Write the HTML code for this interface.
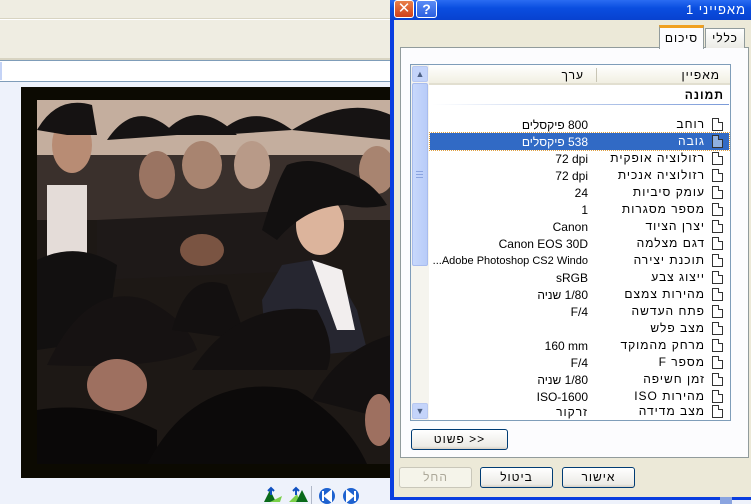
<!DOCTYPE html>
<html><head><meta charset="utf-8"><style>
*{margin:0;padding:0;box-sizing:border-box}
body{width:751px;height:504px;overflow:hidden;position:relative;background:#eef2fb;font-family:"Liberation Sans","DejaVu Sans",sans-serif;font-size:11px;color:#000}
.abs{position:absolute}
.row{position:absolute;left:430px;width:299px;height:17px;line-height:17px}
.row .n{position:absolute;right:24px;top:0;direction:rtl;white-space:nowrap;font-size:12px;letter-spacing:1px;line-height:17px}
.row .v{position:absolute;right:141px;top:1px;white-space:nowrap;direction:rtl;font-size:12px;line-height:17px}
.row .v.l{direction:ltr}
.row .ic{position:absolute;right:6px;top:2px;width:11px;height:13px;border:1px solid #333;background:#fff}
.row .ic:after{content:"";position:absolute;right:-1px;top:-1px;width:4px;height:4px;background:#fff;border-left:1px solid #333;border-bottom:1px solid #333}
.sel{background:#316ac5;color:#fff;outline:1px dotted #e0a040}
.sel .ic{background:#8fb0e0}
.sel .ic:after{background:#316ac5}
.btn{position:absolute;height:21px;border:1px solid #003c74;border-radius:3px;background:linear-gradient(#fff,#ecebe6 85%,#d6d0c5);text-align:center;line-height:19px;font-size:12px;letter-spacing:1px;direction:rtl}
</style></head><body>
<div class="abs" style="left:0;top:0;width:391px;height:60px;background:#efede2"></div>
<div class="abs" style="left:0;top:18px;width:391px;height:2px;background:#d8d4c2;border-bottom:1px solid #fff"></div>
<div class="abs" style="left:0;top:58px;width:391px;height:2px;background:#d8d4c2"></div>
<div class="abs" style="left:0;top:60px;width:391px;height:22px;background:#fff;border-top:1px solid #7f9db9;border-bottom:1px solid #7f9db9"></div>
<div class="abs" style="left:0;top:62px;width:2px;height:18px;background:#c4d3f6"></div>
<div class="abs" style="left:21px;top:87px;width:370px;height:391px;background:#0c0a02"></div>
<svg class="abs" style="left:37px;top:100px" width="354" height="364" viewBox="0 0 354 364">
<rect width="354" height="364" fill="#1d1815"/>
<rect width="354" height="55" fill="#c4ae9e"/>
<rect y="55" width="354" height="65" fill="#3a302c"/>
<ellipse cx="35" cy="45" rx="20" ry="28" fill="#b88c74"/>
<rect x="10" y="85" width="40" height="80" fill="#e4dcd8"/>
<ellipse cx="120" cy="75" rx="18" ry="24" fill="#9a7462"/>
<ellipse cx="165" cy="65" rx="20" ry="24" fill="#a88470"/>
<ellipse cx="215" cy="65" rx="18" ry="24" fill="#b89a88"/>
<ellipse cx="340" cy="70" rx="18" ry="24" fill="#a88470"/>
<path d="M0 30 Q20 -5 55 5 L60 35 L30 35Z" fill="#151212"/>
<path d="M70 40 Q100 -5 140 35Z" fill="#161313"/>
<path d="M125 35 Q160 -5 200 35Z" fill="#161313"/>
<path d="M180 35 Q215 0 255 30Z" fill="#161313"/>
<path d="M255 30 Q310 -5 354 15 L354 40Z" fill="#161313"/>
<path d="M60 120 L270 110 L290 170 L60 180Z" fill="#1e1918"/>
<ellipse cx="165" cy="150" rx="22" ry="16" fill="#7a5442"/>
<ellipse cx="283" cy="125" rx="24" ry="30" fill="#dcb49c"/>
<path d="M225 130 Q240 80 250 65 Q275 55 305 70 Q335 80 350 105 Q330 110 310 105 Q270 105 240 140Z" fill="#121010"/>
<path d="M245 165 L275 160 L300 175 L320 210 L330 250 L230 260 L225 200Z" fill="#262630"/>
<path d="M275 160 L305 170 L318 230 L300 230Z" fill="#f2eeee"/>
<path d="M0 160 Q40 140 80 165 L70 240 L0 250Z" fill="#121010"/>
<path d="M10 265 Q50 180 110 200 Q150 220 160 250 Q120 270 10 265Z" fill="#161212"/>
<ellipse cx="80" cy="285" rx="30" ry="26" fill="#9e7060"/>
<path d="M135 230 Q150 170 190 185 L210 240Z" fill="#131010"/>
<path d="M155 270 Q200 200 280 210 Q300 245 290 270Z" fill="#131010"/>
<path d="M275 300 Q300 250 354 235 L354 320Z" fill="#131010"/>
<ellipse cx="342" cy="320" rx="14" ry="26" fill="#9e7060"/>
<path d="M0 310 Q60 300 120 330 L120 364 L0 364Z" fill="#0a0808"/>
<path d="M110 364 Q160 270 260 290 Q310 320 330 364Z" fill="#0c0a0a"/>
</svg>
<svg class="abs" style="left:262px;top:486px" width="100" height="18">
<path d="M2 16 L8 4 L14 16Z" fill="#0a6a1a"/><path d="M8 16 L20 10 L18 16Z" fill="#7ad04a"/><path d="M9 9 L9 2 M6 5 L9 2 L12 5" stroke="#1050c0" stroke-width="2" fill="none"/>
<path d="M27 16 L35 8 L38 16Z" fill="#7ad04a"/><path d="M34 16 L40 4 L46 16Z" fill="#0a6a1a"/><path d="M34 9 L34 2 M31 5 L34 2 L37 5" stroke="#1050c0" stroke-width="2" fill="none"/>
<rect x="49" y="0" width="1" height="18" fill="#b0b8c8"/>
<circle cx="65" cy="10" r="8" fill="#1e62d0"/><path d="M61 5v10M69 5l-6 5 6 5Z" stroke="#fff" stroke-width="2" fill="#fff"/>
<circle cx="89" cy="10" r="8" fill="#1e62d0"/><path d="M93 5v10M85 5l6 5-6 5Z" stroke="#fff" stroke-width="2" fill="#fff"/>
</svg>
<div class="abs" style="left:390px;top:0;width:361px;height:500px;background:#0a3ee0"></div>
<div class="abs" style="left:390px;top:0;width:361px;height:20px;background:linear-gradient(#2a6cf2,#0a4ee0 40%,#0842d0)"></div>
<div class="abs" style="left:600px;top:2px;width:146px;text-align:right;color:#fff;font-size:13px;direction:rtl;line-height:16px;letter-spacing:1px">מאפייני 1</div>
<div class="abs" style="left:394px;top:0;width:20px;height:18px;border:1px solid #fff;border-radius:3px;background:linear-gradient(#e8804a,#d0401a);color:#fff;font-weight:bold;font-size:15px;text-align:center;line-height:16px">✕</div>
<div class="abs" style="left:416px;top:0;width:21px;height:18px;border:1px solid #fff;border-radius:3px;background:linear-gradient(#5a8cf6,#2a60e0);color:#fff;font-weight:bold;font-size:14px;text-align:center;line-height:16px">?</div>
<div class="abs" style="left:394px;top:20px;width:357px;height:477px;background:#ece9d8"></div>
<div class="abs" style="left:400px;top:47px;width:349px;height:411px;background:#fcfcfe;border:1px solid #919b9c"></div>
<div class="abs" style="left:705px;top:28px;width:40px;height:20px;background:linear-gradient(#fff,#ecebe6);border:1px solid #919b9c;border-bottom:none;text-align:center;line-height:18px;font-size:12px;letter-spacing:1px;direction:rtl">כללי</div>
<div class="abs" style="left:659px;top:25px;width:45px;height:24px;background:#fcfcfe;border:1px solid #919b9c;border-top:3px solid #f0a020;border-bottom:none;text-align:center;line-height:20px;font-size:12px;letter-spacing:1px;direction:rtl">סיכום</div>
<div class="abs" style="left:410px;top:64px;width:321px;height:357px;background:#fff;border:1px solid #7f9db9"></div>
<div class="abs" style="left:429px;top:65px;width:301px;height:20px;background:linear-gradient(#fff,#f1efe2);border-bottom:2px solid #e2dfd0"></div>
<div class="abs" style="left:596px;top:68px;width:1px;height:14px;background:#c8c5b5"></div>
<div class="abs" style="left:620px;top:66px;width:100px;text-align:right;line-height:18px;font-size:12px;letter-spacing:1px;direction:rtl">מאפיין</div>
<div class="abs" style="left:500px;top:66px;width:84px;text-align:right;line-height:18px;font-size:12px;letter-spacing:1px;direction:rtl">ערך</div>
<div class="abs" style="left:600px;top:86px;width:124px;text-align:right;line-height:18px;font-size:12px;font-weight:bold;letter-spacing:1px;direction:rtl">תמונה</div>
<div class="abs" style="left:432px;top:104px;width:297px;height:1px;background:linear-gradient(90deg,#fff,#7a9ad8)"></div>
<div class="abs" style="left:411px;top:65px;width:18px;height:355px;background:#f5f4ee"></div>
<div class="abs" style="left:412px;top:66px;width:16px;height:16px;border:1px solid #b8c8f0;border-radius:2px;background:#c4d4fa;color:#4d6185;font-size:9px;text-align:center;line-height:14px">▲</div>
<div class="abs" style="left:412px;top:83px;width:16px;height:183px;border:1px solid #a8bcee;border-radius:2px;background:linear-gradient(90deg,#c8d8fc,#b8ccf8)"></div>
<div class="abs" style="left:416px;top:171px;width:7px;height:7px;border-top:1px solid #8aa4e0;border-bottom:1px solid #8aa4e0"><div style="margin-top:2px;height:1px;background:#8aa4e0"></div></div>
<div class="abs" style="left:412px;top:403px;width:16px;height:16px;border:1px solid #b8c8f0;border-radius:2px;background:#c4d4fa;color:#4d6185;font-size:9px;text-align:center;line-height:14px">▼</div>

<div class="row" style="top:116px"><span class="n">רוחב</span><span class="v">800 פיקסלים</span><span class="ic"></span></div>
<div class="row sel" style="top:133px"><span class="n">גובה</span><span class="v">538 פיקסלים</span><span class="ic"></span></div>
<div class="row" style="top:150px"><span class="n">רזולוציה אופקית</span><span class="v l">72 dpi</span><span class="ic"></span></div>
<div class="row" style="top:167px"><span class="n">רזולוציה אנכית</span><span class="v l">72 dpi</span><span class="ic"></span></div>
<div class="row" style="top:184px"><span class="n">עומק סיביות</span><span class="v l">24</span><span class="ic"></span></div>
<div class="row" style="top:201px"><span class="n">מספר מסגרות</span><span class="v l">1</span><span class="ic"></span></div>
<div class="row" style="top:218px"><span class="n">יצרן הציוד</span><span class="v l">Canon</span><span class="ic"></span></div>
<div class="row" style="top:235px"><span class="n">דגם מצלמה</span><span class="v l">Canon EOS 30D</span><span class="ic"></span></div>
<div class="row" style="top:252px"><span class="n">תוכנת יצירה</span><span class="v l" style="font-size:11px">...Adobe Photoshop CS2 Windo</span><span class="ic"></span></div>
<div class="row" style="top:269px"><span class="n">ייצוג צבע</span><span class="v l">sRGB</span><span class="ic"></span></div>
<div class="row" style="top:286px"><span class="n">מהירות צמצם</span><span class="v">1/80 שניה</span><span class="ic"></span></div>
<div class="row" style="top:303px"><span class="n">פתח העדשה</span><span class="v l">F/4</span><span class="ic"></span></div>
<div class="row" style="top:320px"><span class="n">מצב פלש</span><span class="v"></span><span class="ic"></span></div>
<div class="row" style="top:337px"><span class="n">מרחק מהמוקד</span><span class="v l">160 mm</span><span class="ic"></span></div>
<div class="row" style="top:354px"><span class="n">מספר F</span><span class="v l">F/4</span><span class="ic"></span></div>
<div class="row" style="top:371px"><span class="n">זמן חשיפה</span><span class="v">1/80 שניה</span><span class="ic"></span></div>
<div class="row" style="top:388px"><span class="n">מהירות ISO</span><span class="v l">ISO-1600</span><span class="ic"></span></div>
<div class="row" style="top:403px"><span class="n">מצב מדידה</span><span class="v" style="letter-spacing:1px">זרקור</span><span class="ic"></span></div>

<div class="btn" style="left:411px;top:429px;width:97px">&lt;&lt; פשוט</div>
<div class="btn" style="left:399px;top:467px;width:73px;border-color:#c9c7ba;color:#aca899;background:#f5f4ea">החל</div>
<div class="btn" style="left:480px;top:467px;width:73px">ביטול</div>
<div class="btn" style="left:562px;top:467px;width:73px">אישור</div>
<div class="abs" style="left:390px;top:500px;width:361px;height:4px;background:#eef2fb"></div>
<div class="abs" style="left:720px;top:497px;width:12px;height:7px;background:#8aa4e0"></div>
</body></html>
